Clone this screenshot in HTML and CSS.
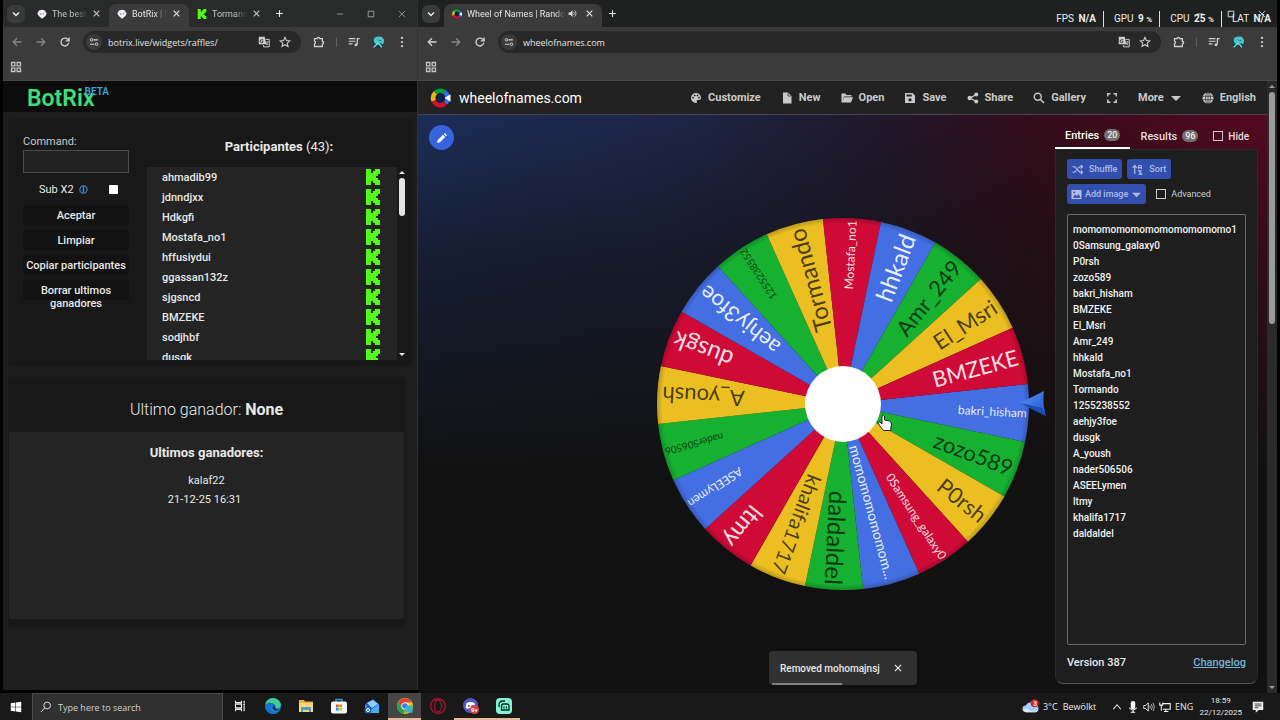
FILE: index.html
```
<!DOCTYPE html>
<html lang="en">
<head>
    <meta charset="UTF-8">
    <meta name="viewport" content="width=device-width, initial-scale=1.0">
    <title>Wheel of Names | Random name picker</title>
    <link rel="stylesheet" href="styles.css">
</head>
<body>

    <!-- shared icons -->
    <svg class="sprite" aria-hidden="true">
        <symbol id="i-down" viewBox="0 0 16 16"><path d="M4 6l4 4 4-4" fill="none" stroke="currentColor" stroke-width="2"/></symbol>
        <symbol id="i-x" viewBox="0 0 16 16"><path d="M3 3l10 10M13 3L3 13" fill="none" stroke="currentColor" stroke-width="2"/></symbol>
        <symbol id="i-winx" viewBox="0 0 16 16"><path d="M3 3l10 10M13 3L3 13" fill="none" stroke="currentColor" stroke-width="1.2"/></symbol>
        <symbol id="i-plus" viewBox="0 0 16 16"><path d="M8 2v12M2 8h12" fill="none" stroke="currentColor" stroke-width="2"/></symbol>
        <symbol id="i-min" viewBox="0 0 16 16"><path d="M3 8h10" fill="none" stroke="currentColor" stroke-width="1.3"/></symbol>
        <symbol id="i-max" viewBox="0 0 16 16"><path d="M3.500 3.500h9v9h-9z" fill="none" stroke="currentColor" stroke-width="1.400"/></symbol>
        <symbol id="i-back" viewBox="0 0 16 16"><path d="M14 8H3M8 3L3 8l5 5" fill="none" stroke="currentColor" stroke-width="1.800"/></symbol>
        <symbol id="i-fwd" viewBox="0 0 16 16"><path d="M2 8h11M8 3l5 5-5 5" fill="none" stroke="currentColor" stroke-width="1.800"/></symbol>
        <symbol id="i-reload" viewBox="0 0 16 16"><path d="M13 9a5.200 5.200 0 1 1-1.500-4.700L13 6M13.500 2v4.500H9" fill="none" stroke="currentColor" stroke-width="1.800"/></symbol>
        <symbol id="i-tune" viewBox="0 0 16 16"><path d="M7 4.500h7M1.500 11.500h7" stroke="currentColor" stroke-width="1.800"/><circle cx="4" cy="4.500" r="2" fill="none" stroke="currentColor" stroke-width="1.600"/><circle cx="12" cy="11.500" r="2" fill="none" stroke="currentColor" stroke-width="1.600"/></symbol>
        <symbol id="i-translate" viewBox="0 0 16 16"><path d="M1 1h8l2 10H1z" fill="currentColor"/><path d="M10 4.500h5v10H7.500L7 12" fill="none" stroke="currentColor" stroke-width="1.300"/><path d="M7 5H5.200a2 2 0 1 0 1.600 2.200H5.400" fill="none" stroke="#2a2a2a" stroke-width="1.200"/><path d="M10.500 8h4M12.500 7v1.200c0 2-1 3-2 4M11 9.500l2.500 2.800" fill="none" stroke="currentColor"/></symbol>
        <symbol id="i-star" viewBox="0 0 16 16"><path d="M8 1.800l1.900 4.200 4.500.5-3.400 3 1 4.500-4-2.400-4 2.400 1-4.500-3.400-3 4.500-.5z" fill="none" stroke="currentColor" stroke-width="1.400"/></symbol>
        <symbol id="i-puzzle" viewBox="0 0 16 16"><path d="M2 3.500h3.500a1.700 1.700 0 0 1 3.400 0H12.500V7a1.700 1.700 0 0 1 0 3.400V14H2v-3.500a1.900 1.900 0 0 0 0-3.600z" fill="none" stroke="currentColor" stroke-width="1.700"/></symbol>
        <symbol id="i-music" viewBox="0 0 16 16"><path d="M1 3.500h9M1 7h9M1 10.500h5M15.500 3.500h-3V11" fill="none" stroke="currentColor" stroke-width="1.600"/><circle cx="10.700" cy="11.500" r="2" fill="currentColor"/></symbol>
        <symbol id="i-dots" viewBox="0 0 16 16"><g fill="currentColor"><circle cx="8" cy="2.500" r="1.500"/><circle cx="8" cy="8" r="1.500"/><circle cx="8" cy="13.500" r="1.500"/></g></symbol>
        <symbol id="i-apps" viewBox="0 0 16 16"><path d="M2 2h4.500v4.500H2zM9.500 2H14v4.500H9.500zM2 9.500h4.500V14H2zM9.500 9.500H14V14H9.500z" fill="none" stroke="currentColor" stroke-width="1.700"/></symbol>
        <symbol id="i-avatar" viewBox="0 0 16 16"><circle cx="8" cy="8" r="7.500" fill="#17424c"/><path d="M3 2l4-1.500 5 .5 3 4-1 5-4-1-3 1-4-1-1-4z" fill="#4cc5cb"/><path d="M2 14l5-5 3 2 2 3" stroke="#8be6e4" fill="none" stroke-width="1.500"/><path d="M7 4l2 2 3-1" stroke="#1b6b77" fill="none"/></symbol>
        <symbol id="i-botrix" viewBox="0 0 16 16"><path d="M8 1l4 1 3.500 5-2 4L8 15.500 3 11 .5 7 3 2.500z" fill="#f1eff8"/><path d="M6 7v2.500M10 6v2.500" stroke="#777" stroke-width="1.400"/></symbol>
        <symbol id="i-kick" viewBox="0 0 14 16"><path d="M0 0h5v4h2V2h2V0h5v5h-2v2h-2v2h2v2h2v5H9v-2H7v-2H5v4H0z" fill="#53fc18"/></symbol>
        <symbol id="i-wheel" viewBox="0 0 24 24"><circle cx="12" cy="12" r="12" fill="#0c2145"/><g fill="none" stroke-width="5.500"><path d="M3.900 15.500A8.700 8.700 0 0 1 6 5.600" stroke="#eeb211"/><path d="M6 5.600A8.700 8.700 0 0 1 17 5" stroke="#0a9e32"/><path d="M17 5a8.700 8.700 0 0 1 1 13.200" stroke="#3c70e6"/><path d="M18 18.200A8.700 8.700 0 0 1 3.900 15.500" stroke="#d50f25"/></g><path d="M17 12l7-4.500v9z" fill="#fff"/></symbol>
        <symbol id="i-sound" viewBox="0 0 16 16"><path d="M1 6h3l4-4v12l-4-4H1z" fill="currentColor"/><path d="M10 5.500a3.500 3.500 0 0 1 0 5M11.500 2.500a7 7 0 0 1 0 11" fill="none" stroke="currentColor" stroke-width="1.400"/></symbol>
        <symbol id="i-palette" viewBox="0 0 24 24"><path d="M12 2a10 10 0 0 0 0 20c2 0 2.600-1.600 1.600-3-.8-1.300 0-2.800 1.600-2.800H18a4.200 4.200 0 0 0 4-4.200C22 6.400 17.500 2 12 2zM6 13a1.700 1.700 0 1 1 0-3.400A1.700 1.700 0 0 1 6 13zm3.500-4.500a1.700 1.700 0 1 1 0-3.400 1.700 1.700 0 0 1 0 3.400zm5.500 0a1.700 1.700 0 1 1 0-3.400 1.700 1.700 0 0 1 0 3.400zm3 4.500a1.700 1.700 0 1 1 0-3.400 1.700 1.700 0 0 1 0 3.400z" fill="currentColor"/></symbol>
        <symbol id="i-file" viewBox="0 0 24 24"><path d="M4 1h10l7 7v15H4z" fill="currentColor"/><path d="M14 2v6h6" stroke="#222" stroke-width="1.500" fill="none"/></symbol>
        <symbol id="i-folder" viewBox="0 0 24 24"><path d="M1 21V3h8l2 3h10v3H6L3 18l3.500-7.500H24L20 21z" fill="currentColor"/></symbol>
        <symbol id="i-save" viewBox="0 0 24 24"><path d="M17 2H2v20h20V7zM12 19a3.300 3.300 0 1 1 0-6.600 3.300 3.300 0 0 1 0 6.600zM15.500 9H5V5h10.500z" fill="currentColor"/></symbol>
        <symbol id="i-share" viewBox="0 0 24 24"><path d="M19 5L6 12l13 7" fill="none" stroke="currentColor" stroke-width="2.500"/><g fill="currentColor"><circle cx="18.500" cy="5" r="4"/><circle cx="5.500" cy="12" r="4.500"/><circle cx="18.500" cy="19" r="4"/></g></symbol>
        <symbol id="i-search" viewBox="0 0 24 24"><circle cx="9.500" cy="9.500" r="7" fill="none" stroke="currentColor" stroke-width="2.800"/><path d="M14.500 14.500L22 22" stroke="currentColor" stroke-width="3.200"/></symbol>
        <symbol id="i-full" viewBox="0 0 24 24"><path d="M3.500 9V3.500H9M15 3.500h5.500V9M20.500 15v5.500H15M9 20.500H3.500V15" fill="none" stroke="currentColor" stroke-width="3"/></symbol>
        <symbol id="i-caret" viewBox="0 0 24 24"><path d="M2 8h20L12 18z" fill="currentColor"/></symbol>
        <symbol id="i-globe" viewBox="0 0 24 24"><circle cx="12" cy="12" r="11" fill="currentColor"/><path d="M1 8.500h22M1 15.500h22M12 1v22" stroke="#222" stroke-width="1.300"/><ellipse cx="12" cy="12" rx="5" ry="11" fill="none" stroke="#222" stroke-width="1.300"/></symbol>
        <symbol id="i-pencil" viewBox="0 0 24 24"><path d="M2 22l1.500-6L14 5.500l4.500 4.500L8 20.500zM15.500 4l2-2 4.500 4.500-2 2z" fill="currentColor"/></symbol>
        <symbol id="i-shuffle" viewBox="0 0 24 24"><path d="M1 6h5l11 12h5M1 18h5l3.500-4M13 9.500L17 6h5M19 2l4 4-4 4M19 14l4 4-4 4" fill="none" stroke="currentColor" stroke-width="2.600"/></symbol>
        <symbol id="i-sort" viewBox="0 0 24 24"><path d="M6 22V4M1.500 8.500L6 3l4.500 5.500M14 22h7l-6-7h6" fill="none" stroke="currentColor" stroke-width="2.600"/><path d="M14 11V6a3.300 3.300 0 0 1 6.600 0v5M14 8h6.500" fill="none" stroke="currentColor" stroke-width="2.400"/></symbol>
        <symbol id="i-image" viewBox="0 0 24 24"><path d="M1 2h22v20H1z" fill="currentColor"/><path d="M4 19l5-7 4 4 3-5 5 8z" fill="#334fae"/><circle cx="7" cy="7.500" r="2" fill="#334fae"/></symbol>
    </svg>

    <main class="desktop">

        <!-- botrix window -->
        <section class="window window-left">
            <div class="tabstrip">
                <button class="tab-list" aria-label="Search tabs"><svg><use href="#i-down"/></svg></button>
                <div class="tab"><svg class="fav"><use href="#i-botrix"/></svg><span class="tab-name">The best</span><button aria-label="Close"><svg><use href="#i-x"/></svg></button></div>
                <div class="tab tab-active"><svg class="fav"><use href="#i-botrix"/></svg><span class="tab-name">BotRix | S</span><button aria-label="Close"><svg><use href="#i-x"/></svg></button></div>
                <div class="tab"><svg class="fav fav-kick"><use href="#i-kick"/></svg><span class="tab-name">Tormando</span><button aria-label="Close"><svg><use href="#i-x"/></svg></button></div>
                <button class="new-tab" aria-label="New tab"><svg><use href="#i-plus"/></svg></button>
                <div class="win-buttons">
                    <button aria-label="Minimize"><svg><use href="#i-min"/></svg></button>
                    <button aria-label="Maximize"><svg><use href="#i-max"/></svg></button>
                    <button aria-label="Close window"><svg><use href="#i-winx"/></svg></button>
                </div>
            </div>
            <div class="toolbar">
                <button class="dim" aria-label="Back"><svg><use href="#i-back"/></svg></button>
                <button class="dim" aria-label="Forward"><svg><use href="#i-fwd"/></svg></button>
                <button aria-label="Reload"><svg><use href="#i-reload"/></svg></button>
                <div class="address">
                    <span class="tune"><svg><use href="#i-tune"/></svg></span>
                    <input type="text" value="botrix.live/widgets/raffles/" aria-label="Address">
                    <svg><use href="#i-translate"/></svg>
                    <svg><use href="#i-star"/></svg>
                </div>
                <button aria-label="Extensions"><svg><use href="#i-puzzle"/></svg></button>
                <span class="sep"></span>
                <button aria-label="Media"><svg><use href="#i-music"/></svg></button>
                <button class="avatar" aria-label="Profile"><svg><use href="#i-avatar"/></svg></button>
                <button aria-label="Menu"><svg><use href="#i-dots"/></svg></button>
            </div>
            <div class="bookmarks"><button aria-label="Apps"><svg><use href="#i-apps"/></svg></button></div>

            <div class="botrix">
                <header class="botrix-head"><a href="#" class="logo">BotRix<sup>BETA</sup></a></header>

                <div class="panel raffle">
                    <form class="controls">
                        <label for="command">Command:</label>
                        <input type="text" id="command">
                        <div class="sub">
                            <label for="subx2">Sub X2</label>
                            <svg viewBox="0 0 16 16"><circle cx="8" cy="8" r="6.500" fill="none" stroke="#3b8fd0" stroke-width="2"/><path d="M8 3v10" stroke="#3b8fd0" stroke-width="2.500"/></svg>
                            <input type="checkbox" id="subx2">
                        </div>
                        <button type="button">Aceptar</button>
                        <button type="button">Limpiar</button>
                        <button type="button">Copiar participantes</button>
                        <button type="button">Borrar ultimos ganadores</button>
                    </form>
                    <div class="people">
                        <h2>Participantes <span>(43)</span>:</h2>
                        <div class="people-box">
                            <ul>
                                <li>ahmadib99<svg><use href="#i-kick"/></svg></li>
                                <li>jdnndjxx<svg><use href="#i-kick"/></svg></li>
                                <li>Hdkgfi<svg><use href="#i-kick"/></svg></li>
                                <li>Mostafa_no1<svg><use href="#i-kick"/></svg></li>
                                <li>hffusiydui<svg><use href="#i-kick"/></svg></li>
                                <li>ggassan132z<svg><use href="#i-kick"/></svg></li>
                                <li>sjgsncd<svg><use href="#i-kick"/></svg></li>
                                <li>BMZEKE<svg><use href="#i-kick"/></svg></li>
                                <li>sodjhbf<svg><use href="#i-kick"/></svg></li>
                                <li>dusgk<svg><use href="#i-kick"/></svg></li>
                            </ul>
                            <div class="scroll"><i class="up"></i><i class="thumb"></i><i class="down"></i></div>
                        </div>
                    </div>
                </div>

                <div class="panel winners">
                    <p class="last">Ultimo ganador: <b>None</b></p>
                    <div class="winner-box">
                        <h3>Ultimos ganadores:</h3>
                        <p>kalaf22</p>
                        <p class="date">21-12-25 16:31</p>
                    </div>
                </div>
            </div>
        </section>

        <!-- wheel window -->
        <section class="window window-right">
            <div class="tabstrip">
                <button class="tab-list" aria-label="Search tabs"><svg><use href="#i-down"/></svg></button>
                <div class="tab tab-active tab-wide"><svg class="fav"><use href="#i-wheel"/></svg><span class="tab-name">Wheel of Names | Random</span><svg class="sound"><use href="#i-sound"/></svg><button aria-label="Close"><svg><use href="#i-x"/></svg></button></div>
                <button class="new-tab" aria-label="New tab"><svg><use href="#i-plus"/></svg></button>
                <div class="win-buttons">
                    <button aria-label="Minimize"><svg><use href="#i-min"/></svg></button>
                    <button aria-label="Maximize"><svg><use href="#i-max"/></svg></button>
                    <button aria-label="Close window"><svg><use href="#i-winx"/></svg></button>
                </div>
            </div>
            <div class="toolbar">
                <button aria-label="Back"><svg><use href="#i-back"/></svg></button>
                <button class="dim" aria-label="Forward"><svg><use href="#i-fwd"/></svg></button>
                <button aria-label="Reload"><svg><use href="#i-reload"/></svg></button>
                <div class="address">
                    <span class="tune"><svg><use href="#i-tune"/></svg></span>
                    <input type="text" value="wheelofnames.com" aria-label="Address">
                    <svg><use href="#i-translate"/></svg>
                    <svg><use href="#i-star"/></svg>
                </div>
                <button aria-label="Extensions"><svg><use href="#i-puzzle"/></svg></button>
                <span class="sep"></span>
                <button aria-label="Media"><svg><use href="#i-music"/></svg></button>
                <button class="avatar" aria-label="Profile"><svg><use href="#i-avatar"/></svg></button>
                <button aria-label="Menu"><svg><use href="#i-dots"/></svg></button>
            </div>
            <div class="bookmarks"><button aria-label="Apps"><svg><use href="#i-apps"/></svg></button></div>

            <div class="page-row">
                <div class="wheelpage">
                    <header class="site-head">
                        <a href="#" class="brand"><svg><use href="#i-wheel"/></svg>wheelofnames.com</a>
                        <nav>
                            <button><svg><use href="#i-palette"/></svg>Customize</button>
                            <button><svg><use href="#i-file"/></svg>New</button>
                            <button><svg><use href="#i-folder"/></svg>Open</button>
                            <button><svg><use href="#i-save"/></svg>Save</button>
                            <button><svg><use href="#i-share"/></svg>Share</button>
                            <button><svg><use href="#i-search"/></svg>Gallery</button>
                            <button aria-label="Fullscreen"><svg><use href="#i-full"/></svg></button>
                            <button>More<svg><use href="#i-caret"/></svg></button>
                            <button><svg><use href="#i-globe"/></svg>English</button>
                        </nav>
                    </header>

                    <div class="stage">
                        <button class="edit" aria-label="Edit title"><svg><use href="#i-pencil"/></svg></button>

                        <div class="wheel-area">
                            <svg class="wheel" viewBox="-212 -193 424 386" role="img" aria-label="Wheel">
                                <defs>
                                    <path id="slice" d="M0 0L183.700 -29.100A186 186 0 0 1 183.700 29.100Z"/>
                                    <linearGradient id="ptr" x1="0" y1="0" x2="1" y2="1"><stop offset="0" stop-color="#5b93f5"/><stop offset="1" stop-color="#1d55cf"/></linearGradient>
                                    <radialGradient id="shade"><stop offset=".97" stop-color="#000" stop-opacity="0"/><stop offset="1" stop-color="#000" stop-opacity=".2"/></radialGradient>
                                </defs>
                                <g class="blue" transform="rotate(2.800)"><use href="#slice"/><text x="184" class="s12">bakri_hisham</text></g>
                                <g class="green" transform="rotate(20.800)"><use href="#slice"/><text x="181" class="s22">zozo589</text></g>
                                <g class="yellow" transform="rotate(38.800)"><use href="#slice"/><text x="181" class="s22">P0rsh</text></g>
                                <g class="red" transform="rotate(56.800)"><use href="#slice"/><text x="184" class="s12">0Samsung_galaxy0</text></g>
                                <g class="blue" transform="rotate(74.800)"><use href="#slice"/><text x="181" class="s14">momomomomomom...</text></g>
                                <g class="green" transform="rotate(92.800)"><use href="#slice"/><text x="181" class="s24">daldaldel</text></g>
                                <g class="yellow" transform="rotate(110.800)"><use href="#slice"/><text x="181" class="s20">khalifa1717</text></g>
                                <g class="red" transform="rotate(128.800)"><use href="#slice"/><text x="181" class="s24">ltmy</text></g>
                                <g class="blue" transform="rotate(146.800)"><use href="#slice"/><text x="184" class="s12">ASEELymen</text></g>
                                <g class="green" transform="rotate(164.800)"><use href="#slice"/><text x="184" class="s10">nader506506</text></g>
                                <g class="yellow" transform="rotate(182.800)"><use href="#slice"/><text x="181" class="s22">A_yoush</text></g>
                                <g class="red" transform="rotate(200.800)"><use href="#slice"/><text x="181" class="s24">dusgk</text></g>
                                <g class="blue" transform="rotate(218.800)"><use href="#slice"/><text x="181" class="s22">aehjy3foe</text></g>
                                <g class="green" transform="rotate(236.800)"><use href="#slice"/><text x="184" class="s10">1255238552</text></g>
                                <g class="yellow" transform="rotate(254.800)"><use href="#slice"/><text x="181" class="s24">Tormando</text></g>
                                <g class="red" transform="rotate(272.800)"><use href="#slice"/><text x="184" class="s12">Mostafa_no1</text></g>
                                <g class="blue" transform="rotate(290.800)"><use href="#slice"/><text x="181" class="s24">hhkald</text></g>
                                <g class="green" transform="rotate(308.800)"><use href="#slice"/><text x="181" class="s22">Amr_249</text></g>
                                <g class="yellow" transform="rotate(326.800)"><use href="#slice"/><text x="181" class="s22">El_Msri</text></g>
                                <g class="red" transform="rotate(344.800)"><use href="#slice"/><text x="181" class="s22">BMZEKE</text></g>
                                <circle r="186" fill="url(#shade)"/>
                                <circle r="38" fill="#fff"/>
                                <path d="M177 -1L201 -13Q199 0 203 12Z" fill="url(#ptr)"/>
                                <path d="M177 -1L203 12L199 4Z" fill="#174bb8"/>
                                <!-- hand cursor -->
                                <path d="M38 15.500l-3 -4.500q0 -2 2 -1l2 2v-8q1.500 -2 2.500 0v4l5 1q2 1 2 3l-1 6.500h-7z" transform="translate(0 8)" fill="#fff" stroke="#000" stroke-width=".8"/>
                            </svg>
                        </div>

                        <aside class="side">
                            <div class="side-tabs">
                                <button class="on">Entries <span>20</span></button>
                                <button>Results <span>96</span></button>
                                <label><input type="checkbox">Hide</label>
                            </div>
                            <div class="side-body">
                                <div class="side-tools">
                                    <button><svg><use href="#i-shuffle"/></svg>Shuffle</button>
                                    <button><svg><use href="#i-sort"/></svg>Sort</button>
                                </div>
                                <div class="side-tools">
                                    <button class="add"><svg><use href="#i-image"/></svg>Add image<svg><use href="#i-caret"/></svg></button>
                                    <label><input type="checkbox">Advanced</label>
                                </div>
                                <textarea aria-label="Entries">momomomomomomomomomomo1
0Samsung_galaxy0
P0rsh
zozo589
bakri_hisham
BMZEKE
El_Msri
Amr_249
hhkald
Mostafa_no1
Tormando
1255238552
aehjy3foe
dusgk
A_yoush
nader506506
ASEELymen
ltmy
khalifa1717
daldaldel</textarea>
                                <div class="side-foot"><span>Version 387</span><a href="#">Changelog</a></div>
                            </div>
                        </aside>

                        <div class="toast" role="status">Removed mohomajnsj<button aria-label="Dismiss"><svg><use href="#i-x"/></svg></button></div>
                    </div>
                </div>
                <div class="scroll page-scroll"><i class="up"></i><i class="thumb"></i><i class="down"></i></div>
            </div>

            <!-- performance overlay, drawn over the window buttons -->
            <div class="perf">
                <span>FPS <b>N/A</b></span>
                <span>GPU <b>9 <small>%</small></b></span>
                <span>CPU <b>25 <small>%</small></b></span>
                <span>LAT <b>N/A</b></span>
            </div>
        </section>
    </main>

    <footer class="taskbar">
        <button class="start" aria-label="Start"><svg viewBox="0 0 16 16"><path d="M1 3l6-.9v5.500H1zM7.800 2L15 1v6.600H7.800zM1 8.400h6v5.500L1 13zM7.800 8.400H15V15l-7.200-1z" fill="#fff"/></svg></button>
        <div class="task-search">
            <svg viewBox="0 0 16 16"><circle cx="9.500" cy="6" r="4.500" fill="none" stroke="#ddd" stroke-width="1.300"/><path d="M6.300 9.300L1.500 14.500" stroke="#ddd" stroke-width="1.300"/></svg>
            <input type="text" placeholder="Type here to search" aria-label="Search">
        </div>
        <button class="app" aria-label="Task view"><svg class="small" viewBox="0 0 16 16"><path d="M2 1v2.500h8V1M2 15v-2.500h8V15M2 5.500h8v5H2zM13.500 1v3M13.500 7v8" fill="none" stroke="#eee" stroke-width="1.500"/><path d="M12.500 4.500h2v2h-2z" fill="#eee"/></svg></button>
        <button class="app" aria-label="Edge"><svg viewBox="0 0 16 16"><circle cx="8" cy="8" r="8" fill="#1a7fd4"/><path d="M.5 6C2-1 13-2 15.800 6c.5 3-2 4.500-5 4 1-4-4-5.500-7-3.500z" fill="#3fcf8e"/><path d="M.3 6.500C3 4 8 4 9.500 7c-3-.5-5 1.500-3.500 5 1 2 4 3 7 2.500C8 18-1 14 .3 6.500z" fill="#1173c9"/><path d="M9 7.500c-3 1.500-1 5 2.500 5 2 0 3-.5 3.500-1-1 .5-3 .5-4.500-1z" fill="#0d2d57"/></svg></button>
        <button class="app" aria-label="Files"><svg viewBox="0 0 16 16"><path d="M1 2h5l1 1.500h8V14H1z" fill="#e9b23d"/><path d="M1 5h14v9H1z" fill="#fbd874"/><path d="M3 9h10v5h-2v-2H5v2H3z" fill="#4f9bd8"/></svg></button>
        <button class="app" aria-label="Store"><svg viewBox="0 0 16 16"><path d="M5 4V1.500h6V4" fill="none" stroke="#2f9bd6" stroke-width="1.400"/><rect y="3.500" width="16" height="12" rx="2" fill="#f4f4f4"/><path d="M5 6.500h2.700v2.700H5z" fill="#f25022"/><path d="M8.300 6.500H11v2.700H8.300z" fill="#7fba00"/><path d="M5 9.800h2.700v2.700H5z" fill="#00a4ef"/><path d="M8.300 9.800H11v2.700H8.300z" fill="#ffb900"/></svg></button>
        <button class="app" aria-label="Mail"><svg viewBox="0 0 16 16"><path d="M1 6l8-5 6 5v9H1z" fill="#1a5fbd"/><path d="M1 7l7 4 7-5v9H1z" fill="#4fa9f0"/><path d="M3 5l6-3 5 4-6 4z" fill="#8fd0fa"/><circle cx="4" cy="12" r="3.500" fill="#1565c4"/><circle cx="4" cy="12" r="1.500" fill="none" stroke="#fff"/></svg></button>
        <button class="app running focus" aria-label="Chrome"><svg viewBox="0 0 16 16"><circle cx="8" cy="8" r="8" fill="#f2c02e"/><path d="M1.200 4A8 8 0 0 1 15 4.200H8L5 9.500z" fill="#df4334"/><path d="M1.200 4L5 10l3 2-1.500 4A8 8 0 0 1 1.200 4z" fill="#26a04e"/><circle cx="8" cy="8" r="3.600" fill="#fff"/><circle cx="8" cy="8" r="2.800" fill="#3a7bea"/><path d="M8 10l2-2 5-1 1 4-1 4-4-1-3 2z" fill="#38b8c2"/></svg></button>
        <button class="app" aria-label="Opera"><svg viewBox="0 0 16 16"><circle cx="8" cy="8" r="7.300" fill="none" stroke="#a5142f" stroke-width="1.400"/><ellipse cx="8" cy="8" rx="3.500" ry="6" fill="none" stroke="#a5142f" stroke-width="1.300"/></svg></button>
        <button class="app running" aria-label="Discord"><svg viewBox="0 0 16 16"><circle cx="7.500" cy="7.500" r="7.500" fill="#5157c9"/><path d="M3.500 5q4-2 8 0l1 5-2.500 1-1-1h-3l-1 1-2.500-1z" fill="#fff"/><circle cx="5.800" cy="8" r="1" fill="#5157c9"/><circle cx="9.200" cy="8" r="1" fill="#5157c9"/><circle cx="11.500" cy="11.500" r="4.500" fill="#d8434a"/><text x="8" y="14" font-size="6" font-family="Roboto" font-weight="700" fill="#fff">9+</text></svg></button>
        <button class="app running" aria-label="Streamlabs"><svg viewBox="0 0 16 16"><rect width="16" height="16" rx="4" fill="#80f5d2"/><path d="M3 9V7q0-4 4-4h2M5.500 12V8q0-2 2-2H11q2 0 2 2v4z" fill="none" stroke="#0d2a24" stroke-width="1.300"/><path d="M8 8.500v2M10.500 8.500v2" stroke="#0d2a24" stroke-width="1.200"/></svg></button>

        <div class="tray">
            <svg class="weather" viewBox="0 0 18 16"><path d="M4 14a3.500 3.500 0 0 1 0-7 5 5 0 0 1 9-1 4 4 0 0 1 1 8z" fill="#a9cdf7"/><path d="M1 12q3-3 7 0t9 0l-2 2H4z" fill="#dcebff"/><circle cx="13.500" cy="4.500" r="4.300" fill="#cf2226"/><text x="11.900" y="7" font-size="7" font-family="Roboto" font-weight="700" fill="#fff">3</text></svg>
            <span class="temp">3°C</span><span class="sky">Bewölkt</span>
            <svg viewBox="0 0 16 16"><path d="M3 11l5-6 5 6" fill="none" stroke="#eee" stroke-width="1.400"/></svg>
            <svg viewBox="0 0 16 16"><rect x="5" y="0" width="6" height="11" rx="3" fill="#fff"/><path d="M3 9q5 6 10 0M8 12v3.500M5 15h6" stroke="#fff" fill="none" stroke-width="1.500"/></svg>
            <svg viewBox="0 0 16 16"><path d="M1 6h2.500L7 2.500v11L3.500 10H1z" fill="none" stroke="#eee" stroke-width="1.200"/><path d="M9 6q1.500 2 0 4M11 4q3 4 0 8M13.500 2.500q3.500 5.500 0 11" fill="none" stroke="#bbb" stroke-width="1.200"/></svg>
            <svg class="net" viewBox="0 0 16 16"><path d="M5 3.500h10v7.500H5M9 11v3M6.500 14h6M1 2v3.500h4V2M3 5.500V13" fill="none" stroke="#eee" stroke-width="1.400"/></svg>
            <span class="lang">ENG</span>
            <time class="clock">18:59<br>22/12/2025</time>
            <svg class="note" viewBox="0 0 16 16"><path d="M1 1h14v11H9l-4 3.500V12H1z" fill="#eee"/><path d="M3.500 4h9M3.500 6.500h9M3.500 9h5" stroke="#333" stroke-width="1.200"/></svg>
        </div>
    </footer>

</body>
</html>
```
FILE: styles.css
```
* {
    box-sizing: border-box;
}

body {
    margin: 0;
    height: 100vh;
    display: flex;
    flex-direction: column;
    overflow: hidden;
    background-color: #000;
    color: #e8e8e8;
    font-family: Roboto, sans-serif;
    font-size: 11px;
}

button {
    border: 0;
    padding: 0;
    background: none;
    color: inherit;
    font: inherit;
    display: flex;
    align-items: center;
    justify-content: center;
}

svg {
    display: block;
    flex: none;
    width: 12px;
    height: 12px;
}

h2, h3, p, ul {
    margin: 0;
    padding: 0;
}

.sprite {
    position: absolute;
    width: 0;
    height: 0;
}

.desktop {
    flex: 1;
    min-height: 0;
    display: grid;
    grid-template-columns: 415fr 859fr;
    padding: 0 3px;
}

.window {
    position: relative;
    display: flex;
    flex-direction: column;
    min-width: 0;
    min-height: 0;
}

.window-left {
    margin-bottom: 3px;
    border-right: 1px solid #303035;
}

/* browser chrome */
.tabstrip {
    display: flex;
    align-items: center;
    height: 27px;
    padding: 0 4px;
    background-color: #292a2a;
}

.window-right .tabstrip {
    background-color: #1f2020;
}

.tab-list {
    width: 18px;
    height: 18px;
    margin-right: 4px;
    border-radius: 6px;
    background-color: #393a3a;
}

.tab {
    display: flex;
    align-items: center;
    width: 80px;
    height: 23px;
    margin-top: 4px;
    padding: 0 8px 4px;
    color: #c4c4c4;
    font-size: 9px;
}

.tab-active {
    background-color: #3b3b3b;
    border-radius: 7px 7px 0 0;
    color: #e4e4e4;
}

.tab svg {
    width: 9px;
    height: 9px;
}

.tab .fav {
    width: 10px;
    height: 10px;
}

.fav-kick {
    background-color: #101810;
}

.tab-name {
    flex: 1;
    margin: 0 3px 0 5px;
    overflow: hidden;
    white-space: nowrap;
    mask-image: linear-gradient(to right, #000 60%, transparent 95%);
}

.tab-wide {
    width: 158px;
}

.tab-wide .tab-name {
    mask-image: linear-gradient(to right, #000 90%, transparent);
}

.tab-wide .sound {
    margin-right: 8px;
}

.new-tab {
    width: 20px;
}

.new-tab svg {
    width: 9px;
    height: 9px;
}

.win-buttons {
    display: flex;
    margin-left: auto;
    color: #a8a8a8;
}

.win-buttons button {
    width: 31px;
}

.window-left .win-buttons {
    margin-right: -4px;
}

.window-right .win-buttons {
    margin-right: -4px;
    color: #eee;
}

.win-buttons svg {
    width: 10px;
    height: 10px;
}

.toolbar {
    display: flex;
    align-items: center;
    height: 30px;
    padding: 0 3px 0 2px;
    background-color: #3b3b3b;
    color: #cfcfcf;
}

.toolbar button {
    width: 24px;
}

.toolbar button svg {
    width: 12px;
    height: 12px;
}

.toolbar .avatar svg {
    width: 13px;
    height: 13px;
}

.toolbar .dim {
    color: #858585;
}

.address {
    flex: 1;
    min-width: 0;
    display: flex;
    align-items: center;
    gap: 9px;
    height: 22px;
    margin: 0 6px 0 6px;
    padding: 0 10px 0 3px;
    border-radius: 11px;
    background-color: #282828;
}

.address input {
    flex: 1;
    min-width: 0;
    padding: 0;
    border: 0;
    background: none;
    color: #e2e2e2;
    font: 9px "Open Sans", sans-serif;
}

.tune {
    display: grid;
    place-items: center;
    width: 16px;
    height: 16px;
    margin-right: -3px;
    border-radius: 8px;
    background-color: #3b3b3b;
}

.tune svg {
    width: 10px;
    height: 10px;
}

.sep {
    width: 1px;
    height: 9px;
    margin: 0 5px;
    background-color: #606060;
}

.bookmarks {
    height: 24px;
    padding: 4px 7px;
    border-bottom: 1px solid #484848;
    background-color: #3b3b3b;
    color: #c4c4c4;
}

/* botrix page */
.botrix {
    flex: 1;
    padding-bottom: 6px;
    background-color: #1e1e1e;
}

.botrix-head {
    height: 31px;
    padding: 5px 24px 0;
    background-color: #0c0c0c;
}

.logo {
    color: #3fdc78;
    font-size: 23px;
    font-weight: 600;
    line-height: 26px;
    text-decoration: none;
}

.logo sup {
    position: relative;
    top: -2px;
    left: -10px;
    color: #36a2d8;
    font-size: 10px;
    line-height: 0;
}

.panel {
    background-color: #181818;
    box-shadow: 0 0 3px #141414;
}

.raffle {
    display: flex;
    gap: 18px;
    height: 245px;
    margin: 8px 6px 13px;
    padding: 15px 0 5px 14px;
}

.controls {
    width: 106px;
    display: flex;
    flex-direction: column;
    gap: 5px;
}

.controls > label {
    color: #c8c8c8;
    line-height: 14px;
}

.controls > input {
    height: 23px;
    margin-top: -4px;
    border: 1px solid #4c4c4c;
    background-color: #212121;
    color: #eee;
}

.sub {
    display: flex;
    align-items: center;
    height: 20px;
    margin: 1px 0;
    padding: 0 11px 0 16px;
}

.sub svg {
    width: 9px;
    height: 9px;
    margin: 0 auto 0 5px;
}

.sub input {
    appearance: none;
    width: 9px;
    height: 9px;
    margin: 0;
    border-radius: 1px;
    background-color: #fff;
}

.controls button {
    align-items: flex-start;
    height: 20px;
    padding-top: 4px;
    background-color: #121212;
    font-weight: 500;
    line-height: 13px;
}

.people {
    flex: 1;
    display: flex;
    flex-direction: column;
}

.people h2 {
    padding: 3px 0 12px;
    font-size: 13px;
    font-weight: 700;
    line-height: 17px;
    text-align: center;
}

.people h2 span {
    font-weight: 400;
}

.people-box {
    flex: 1;
    min-height: 0;
    display: flex;
}

.people ul {
    flex: 1;
    overflow: hidden;
    background-color: #242424;
    list-style: none;
}

.people li {
    display: flex;
    align-items: center;
    justify-content: space-between;
    height: 20px;
    padding: 0 17px 0 15px;
    font-weight: 500;
}

.people li svg {
    width: 14px;
    height: 16px;
}

.scroll {
    display: flex;
    flex-direction: column;
    align-items: center;
    width: 10px;
    padding: 4px 0;
}

.scroll i {
    width: 0;
    border: 3px solid transparent;
}

.scroll .up {
    border-top-width: 0;
    border-bottom-color: #e8e8e8;
}

.scroll .down {
    margin-top: auto;
    border-bottom-width: 0;
    border-top-color: #e8e8e8;
}

.scroll .thumb {
    width: 6px;
    height: 38px;
    margin-top: 4px;
    border: 0;
    border-radius: 3px;
    background-color: #e4e4e4;
}

.people .scroll {
    margin-right: 4px;
}

.winners {
    margin: 0 13px 0 6px;
    padding-bottom: 7px;
    text-align: center;
}

.last {
    padding: 21px 0 12px;
    font-size: 16px;
    font-weight: 300;
    line-height: 21px;
}

.last b {
    font-weight: 700;
}

.winner-box {
    height: 187px;
    padding-top: 12px;
    background-color: #242424;
}

.winner-box h3 {
    font-size: 13px;
    line-height: 17px;
}

.winner-box p {
    padding-top: 12px;
    line-height: 16px;
}

.winner-box .date {
    padding: 3px 4px 0 0;
}

/* wheel page */
.page-row {
    flex: 1;
    min-height: 0;
    display: flex;
}

.wheelpage {
    flex: 1;
    display: flex;
    flex-direction: column;
    min-width: 0;
}

.site-head {
    display: flex;
    align-items: center;
    justify-content: space-between;
    height: 33px;
    padding: 0 11px;
    background-color: #222;
}

.brand {
    display: flex;
    align-items: center;
    gap: 7px;
    color: #fff;
    font-size: 14px;
    text-decoration: none;
}

.brand svg {
    width: 23px;
    height: 20px;
}

nav {
    display: flex;
    gap: 20px;
    color: #c9c9c9;
    font-weight: 700;
}

nav button {
    gap: 6px;
}

.stage {
    position: relative;
    flex: 1;
    min-height: 0;
    display: flex;
    padding: 8px 9px 9px 11px;
    border-top: 1px solid #4b4351;
    background:
        linear-gradient(to bottom, transparent, rgba(17, 17, 17, .55) 25%, #111 62%),
        linear-gradient(to right, #1b2d58, #1d2547 30%, #20182b 55%, #330c1a 72%, #560822);
}

.edit {
    width: 25px;
    height: 25px;
    margin-top: 2px;
    border-radius: 50%;
    background-color: #3763dd;
    color: #fff;
}

.wheel-area {
    flex: 1;
    min-width: 0;
    display: flex;
    align-items: center;
    justify-content: flex-end;
}

.wheel {
    width: 424px;
    height: 386px;
    max-width: 100%;
}

.wheel text {
    font-family: Lato, sans-serif;
    text-anchor: end;
    dominant-baseline: central;
}

.blue {
    fill: #436fe3;
}

.green {
    fill: #16b131;
}

.yellow {
    fill: #ebbf22;
}

.red {
    fill: #cf0a36;
}

.blue text, .red text {
    fill: #fff;
    fill-opacity: .9;
}

.green text, .yellow text {
    fill: #000;
    fill-opacity: .7;
}

.s10 {
    font-size: 10px;
}

.s12 {
    font-size: 12px;
}

.s14 {
    font-size: 14px;
}

.s20 {
    font-size: 20px;
}

.s22 {
    font-size: 22px;
}

.s24 {
    font-size: 24px;
}

.side {
    width: 203px;
    display: flex;
    flex-direction: column;
    font-weight: 500;
}

.side-tabs {
    display: flex;
    height: 26px;
    color: #e6dcdf;
}

.side-tabs button {
    gap: 5px;
    padding: 0 10px;
}

.side-tabs span {
    padding: 0 3px;
    border-radius: 6px;
    background-color: #746e70;
    color: #eee;
    font-size: 9px;
    line-height: 12px;
}

.side-tabs .on {
    border-bottom: 2px solid #fff;
    color: #fff;
}

.side-tabs label {
    margin-left: auto;
    padding-right: 9px;
    font-size: 10px;
}

.side label {
    display: flex;
    align-items: center;
    gap: 5px;
}

.side input {
    appearance: none;
    width: 10px;
    height: 10px;
    margin: 0;
    border: 1px solid #ccc;
}

.side-body {
    flex: 1;
    display: flex;
    flex-direction: column;
    padding: 9px 11px 8px;
    border: 1px solid #2a2a2a;
    border-bottom-color: #555;
    border-radius: 0 0 8px 8px;
    background-color: #1e1e1e;
}

.side-tools {
    display: flex;
    gap: 5px;
    margin-bottom: 5px;
    font-size: 9px;
}

.side-tools button {
    gap: 6px;
    height: 20px;
    padding: 0 5px;
    border-radius: 3px;
    background-color: #334fae;
    color: #aebbe6;
}

.side-tools .add {
    gap: 3px;
    padding: 0 4px;
}

.side-tools svg {
    width: 11px;
    height: 11px;
}

.side-tools label {
    margin-left: 5px;
    color: #ccc;
    font-weight: 400;
}

textarea {
    flex: 1;
    width: 100%;
    margin-top: 5px;
    padding: 7px 5px;
    border: 1px solid #6a6a6a;
    border-radius: 2px;
    resize: none;
    outline: none;
    overflow: hidden;
    background: none;
    color: #f2f2f2;
    font: 500 10px/16px Roboto, sans-serif;
}

.side-foot {
    display: flex;
    justify-content: space-between;
    padding: 10px 0 4px;
    line-height: 16px;
}

.side-foot a {
    color: #74b5d6;
}

.toast {
    position: absolute;
    left: 351px;
    bottom: 8px;
    display: flex;
    align-items: center;
    gap: 13px;
    height: 34px;
    padding: 0 14px 0 11px;
    border-radius: 4px;
    background: linear-gradient(#808080, #808080) 3px 100% / 70px 2px no-repeat #313131;
    font-size: 10px;
    font-weight: 500;
}

.toast svg {
    width: 10px;
    height: 10px;
}

.page-scroll {
    background-color: #2a2a2a;
}

.page-scroll .thumb {
    height: 232px;
    background-color: #9b9b9b;
}

.page-scroll .up {
    border-bottom-color: #999;
}

.page-scroll .down {
    border-top-color: #999;
}

.perf {
    position: absolute;
    top: 11px;
    right: 6px;
    display: flex;
    color: #ececec;
    font-size: 10px;
    line-height: 15px;
}

.perf b {
    margin-left: 2px;
}

.perf small {
    font-size: 8px;
}

.perf span + span {
    margin-left: 7px;
    padding-left: 10px;
    border-left: 1px solid #ddd;
}

/* taskbar */
.taskbar {
    display: flex;
    height: 27px;
    background-color: #191919;
}

.start {
    width: 32px;
}

.task-search {
    display: flex;
    align-items: center;
    gap: 6px;
    width: 191px;
    padding: 0 7px;
    border: 1px solid #4c4c4c;
    border-bottom: 0;
    background-color: #303030;
}

.task-search input {
    flex: 1;
    min-width: 0;
    padding: 0;
    border: 0;
    background: none;
    font: 9px "Open Sans", sans-serif;
}

.task-search input::placeholder {
    color: #cfcfcf;
}

.app {
    width: 33px;
    border-bottom: 2px solid transparent;
}

.app svg {
    width: 16px;
    height: 16px;
}

.app .small {
    width: 12px;
    height: 12px;
}

.running {
    border-bottom-color: #e8b99a;
}

.focus {
    background-color: #454545;
}

.tray {
    display: flex;
    align-items: center;
    gap: 4px;
    margin-left: auto;
    padding-right: 16px;
    font: 9px "Open Sans", sans-serif;
}

.weather {
    width: 17px;
    height: 15px;
}

.sky {
    margin: 0 11px 0 1px;
}

.lang {
    margin-right: 2px;
}

.clock {
    margin-right: 6px;
    font: 8px/12px Roboto, sans-serif;
    text-align: center;
}
```
